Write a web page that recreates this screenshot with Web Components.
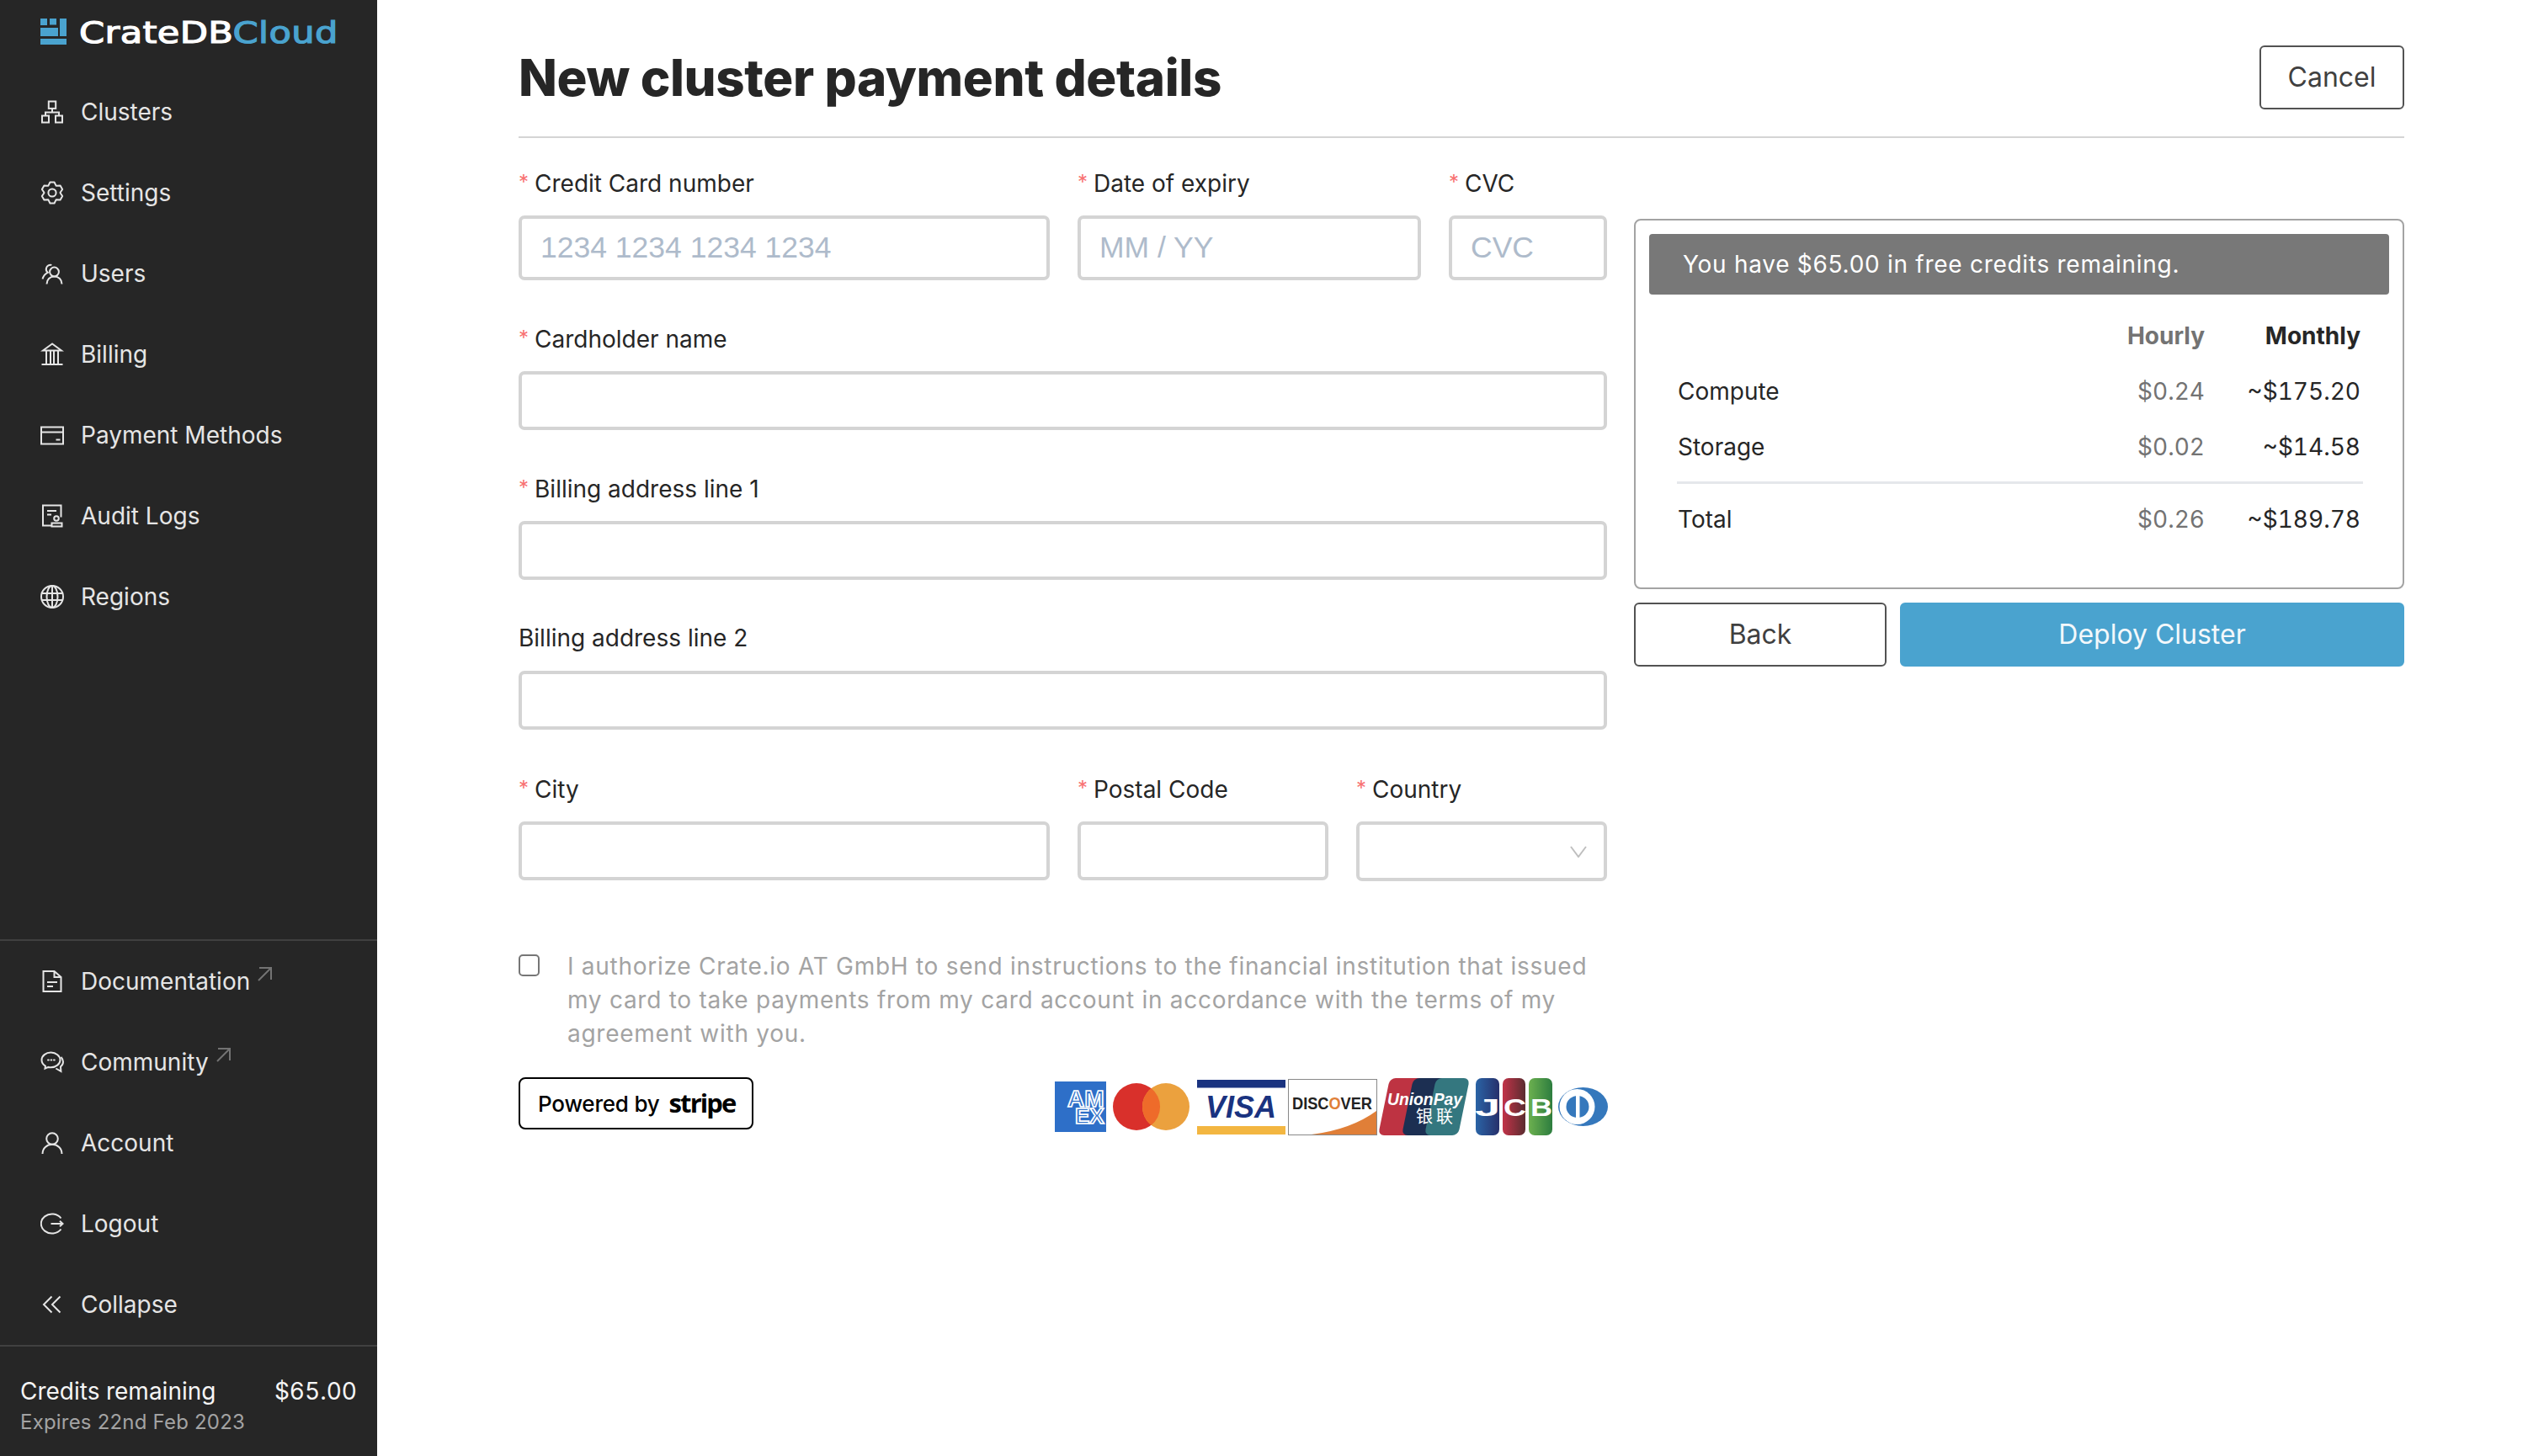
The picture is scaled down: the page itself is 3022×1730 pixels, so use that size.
<!DOCTYPE html>
<html>
<head>
<meta charset="utf-8">
<title>New cluster payment details</title>
<style>
  html, body { margin: 0; height: 100%; background: #fff; }
  body { font-family: Inter, "Noto Sans", sans-serif; overflow: hidden; }
</style>
</head>
<body>
<app-shell>
  <side-nav slot="nav"></side-nav>
  <payment-page></payment-page>
</app-shell>

<script>
// icons are drawn in a 28x28 box
function gearPath() {
  let d = '';
  for (let i = 0; i < 6; i++) {
    const a = (i * 60 - 90) * Math.PI / 180;
    const pt = (r, off) => {
      const x = 14 + r * Math.cos(a + off), y = 14 + r * Math.sin(a + off);
      return x.toFixed(2) + ' ' + y.toFixed(2);
    };
    d += (i ? 'L' : 'M') + pt(9.6, -0.5) + 'L' + pt(12.8, -0.2) + 'L' + pt(12.8, 0.2) + 'L' + pt(9.6, 0.5);
  }
  return d + 'Z';
}

const ICONS = {
  clusters: '<rect x="9.800" y="1.500" width="8.400" height="8.400"/><rect x="2" y="18.500" width="8" height="8"/><rect x="18" y="18.500" width="8" height="8"/><path d="M14 10v4.500M6 18.500v-4h16v4"/>',
  settings: `<path d="${gearPath()}" stroke-linejoin="round"/><circle cx="14" cy="14" r="4.600"/>`,
  users: '<circle cx="16.500" cy="12" r="5.400"/><path d="M7.500 26.500c0-5.200 3.800-9 9-9s9 3.800 9 9"/><path d="M13.400 3.900A5.200 5.200 0 0 0 7 7.500c-.6 2 .1 4 1.700 5.300C5.300 14.500 3.300 17.600 2.500 20.500"/>',
  billing: '<path d="M14 1.500 3 9.500h22zM1.500 26h25M7 9.500V26M12 9.500V26M16 9.500V26M21 9.500V26"/>',
  payment: '<rect x="1" y="4.500" width="26" height="20"/><path d="M1 10.500h26M18.500 19.500h5"/>',
  audit: '<path d="M13 25.500H3V1.500h21.500v14M8 8h11M8 12.500h5"/><circle cx="19" cy="17" r="2.800"/><path d="M13.500 26.500v-4h12v4z"/>',
  regions: '<circle cx="14" cy="14" r="13"/><ellipse cx="14" cy="14" rx="6.500" ry="13"/><path d="M14 1v26M1.500 10h25M1.500 18h25"/>',
  docs: '<path d="M3.500 2h13l8 7v17h-21zM16.500 2v7h8M8 15h12M8 20h7"/>',
  community: '<path d="M12.500 2.500C6.500 2.500 1.500 6.500 1.500 11.500c0 3 1.800 5.500 4.400 7.200l-.4 3 4-1.800c1 .2 2 .3 3 .3 6 0 11-4 11-8.700s-5-9-11-9z"/><path d="M24.500 8c1.300 1.500 2.500 3.500 2.500 5.500 0 2.500-1.100 4.500-3 6l.4 5.500-6-3.500"/><path d="M9 11.500h.8M12.500 11.500h.8M16 11.500h.8" stroke-linecap="round"/>',
  account: '<circle cx="14" cy="9" r="6.800"/><path d="M2.500 27c0-6.500 5-11.200 11.500-11.200S25.500 20.500 25.500 27"/>',
  logout: '<path d="M24.500 7.500A13 11.500 0 1 0 24.500 20.500"/><path d="M12.500 14h14M23 10.800l3.500 3.200-3.500 3.200"/>',
  collapse: '<path d="M13.500 4.500 4 14l9.500 9.500M23.500 4.500 14 14l9.500 9.500"/>'
};

class AppShell extends HTMLElement {
  constructor() {
    super();
    this.attachShadow({ mode: 'open' }).innerHTML = `
    <style>
      :host { display: flex; width: 3022px; height: 1730px; }
      main { flex: 1; min-width: 0; padding: 0 166px 0 168px; }
    </style>
    <slot name="nav"></slot>
    <main><slot></slot></main>`;
  }
}

class BrandLogo extends HTMLElement {
  constructor() {
    super();
    this.attachShadow({ mode: 'open' }).innerHTML = `
    <style>
      :host { display: flex; align-items: flex-start; height: 85px; box-sizing: border-box; padding: 22px 0 0 48px; }
      svg { width: 31px; height: 31px; flex: none; }
      .word {
        margin: -4px 0 0 15px;
        font: 400 36px/42px "DejaVu Sans", sans-serif;
        letter-spacing: .3px;
        color: #fff;
        -webkit-text-stroke: 1.200px currentColor;
        white-space: nowrap;
        transform: scaleX(1.2);
        transform-origin: left;
      }
      .word span { color: #4aa3cf; }
    </style>
    <svg viewBox="0 0 31 31" fill="#4aa3cf">
      <rect width="8" height="8"/><rect x="11" width="8" height="7.500"/><rect x="23" width="8" height="21"/>
      <rect y="11" width="21" height="10"/><rect y="24" width="31" height="7"/>
    </svg>
    <div class="word">CrateDB<span>Cloud</span></div>`;
  }
}

class NavItem extends HTMLElement {
  connectedCallback() {
    const ext = this.hasAttribute('external');
    this.attachShadow({ mode: 'open' }).innerHTML = `
    <style>
      :host { display: flex; align-items: center; height: 96px; padding-left: 48px; color: #e5e5e5; font: 400 28px/40px Inter, sans-serif; }
      .icon { width: 28px; height: 28px; margin-right: 20px; flex: none; fill: none; stroke: currentColor; stroke-width: 2; }
      .ext { width: 19px; height: 19px; margin: -18px 0 0 8px; fill: none; stroke: #737373; stroke-width: 2; }
    </style>
    <svg class="icon" viewBox="0 0 28 28">${ICONS[this.getAttribute('icon')]}</svg>
    <slot></slot>
    ${ext ? '<svg class="ext" viewBox="0 0 19 19"><path d="M3 2h14v14M17 2 2 17"/></svg>' : ''}`;
  }
}

class CreditsBox extends HTMLElement {
  constructor() {
    super();
    this.attachShadow({ mode: 'open' }).innerHTML = `
    <style>
      :host { display: block; flex: none; height: 132px; box-sizing: border-box; padding: 33px 24px 0; border-top: 2px solid #404040; font-family: Inter, sans-serif; }
      .top { display: flex; justify-content: space-between; font-size: 28px; line-height: 40px; color: #f5f5f5; font-variant-numeric: tabular-nums; }
      .exp { font-size: 24px; line-height: 34px; color: #a3a3a3; letter-spacing: .2px; }
    </style>
    <div class="top"><span>Credits remaining</span><span>$65.00</span></div>
    <div class="exp">Expires 22nd Feb 2023</div>`;
  }
}

class SideNav extends HTMLElement {
  constructor() {
    super();
    this.attachShadow({ mode: 'open' }).innerHTML = `
    <style>
      :host { display: flex; flex-direction: column; width: 448px; height: 1730px; background: #262626; flex: none; }
      .grow { flex: 1; }
      .lower { border-top: 2px solid #404040; }
    </style>
    <brand-logo></brand-logo>
    <div class="grow">
      <nav-item icon="clusters">Clusters</nav-item>
      <nav-item icon="settings">Settings</nav-item>
      <nav-item icon="users">Users</nav-item>
      <nav-item icon="billing">Billing</nav-item>
      <nav-item icon="payment">Payment Methods</nav-item>
      <nav-item icon="audit">Audit Logs</nav-item>
      <nav-item icon="regions">Regions</nav-item>
    </div>
    <div class="lower">
      <nav-item icon="docs" external>Documentation</nav-item>
      <nav-item icon="community" external>Community</nav-item>
      <nav-item icon="account">Account</nav-item>
      <nav-item icon="logout">Logout</nav-item>
      <nav-item icon="collapse">Collapse</nav-item>
    </div>
    <credits-box></credits-box>`;
  }
}

class FormField extends HTMLElement {
  connectedCallback() {
    const required = this.hasAttribute('required');
    const h = this.getAttribute('height') || 70;
    const ph = this.getAttribute('placeholder');
    const select = this.hasAttribute('select');
    this.attachShadow({ mode: 'open' }).innerHTML = `
    <style>
      :host { display: block; min-width: 0; font-family: Inter, sans-serif; }
      label { display: block; height: 40px; margin-bottom: 18px; font-size: 28px; line-height: 38px; color: #262626; white-space: nowrap; }
      i { font-style: normal; color: #f87171; font-size: 24px; margin-right: 7px; vertical-align: 3px; }
      .box { display: flex; align-items: center; justify-content: space-between; box-sizing: border-box; height: ${h}px;
        border: 4px solid #d4d4d4; border-radius: 7px; padding: 0 22px; background: #fff; }
      .ph { font: 35.500px/60px "Liberation Sans", Arial, sans-serif; color: #aebbcb; white-space: nowrap; margin-top: -1px; }
      input { flex: 1; min-width: 0; border: 0; outline: 0; padding: 0; font: inherit; background: transparent; }
      svg { width: 20px; height: 14px; margin-right: -2px; fill: none; stroke: #bfbfbf; stroke-width: 2; }
    </style>
    <label>${required ? '<i>*</i>' : ''}<slot></slot></label>
    <div class="box">
      ${ph ? `<span class="ph">${ph}</span>` : select ? '' : '<input type="text">'}
      ${select ? '<span></span><svg viewBox="0 0 20 14"><path d="M1 1l9 12 9-12"/></svg>' : ''}
    </div>`;
  }
}

class StripeBadge extends HTMLElement {
  constructor() {
    super();
    this.attachShadow({ mode: 'open' }).innerHTML = `
    <style>
      :host { display: flex; align-items: center; box-sizing: border-box; width: 279px; height: 62px; padding-left: 21px;
        border: 2px solid #000; border-radius: 8px; color: #000; white-space: nowrap; }
      .p { font: 500 26px Inter, sans-serif; letter-spacing: -.2px; }
      .s { font: 700 31px "Open Sans", sans-serif; margin-left: 11px; letter-spacing: -1.900px; margin-top: -3px; }
    </style>
    <span class="p">Powered by</span><span class="s">stripe</span>`;
  }
}

class CardLogos extends HTMLElement {
  constructor() {
    super();
    this.attachShadow({ mode: 'open' }).innerHTML = `
    <style>
      :host { display: flex; align-items: center; height: 68px; margin: 1px -1px 0 0; }
      svg { flex: none; display: block; }
      text { font-family: "Liberation Sans", Arial, sans-serif; font-weight: 700; }
    </style>
    <svg width="61" height="60" style="margin-right:8px" viewBox="0 0 61 60">
      <rect width="61" height="60" fill="#2e6fc8"/>
      <text fill="#2e6fc8" stroke="#fff" stroke-width="1.700"><tspan x="15" y="30" font-size="28">AM</tspan><tspan x="24" y="50" font-size="26">EX</tspan></text>
    </svg>
    <svg width="91" height="56" style="margin-right:9px" viewBox="0 0 91 56">
      <circle cx="28" cy="28" r="28" fill="#d9302b"/>
      <circle cx="63" cy="28" r="28" fill="#eba13e"/>
      <path d="M45.500 6.100A28 28 0 0 1 45.500 49.900 28 28 0 0 1 45.500 6.100z" fill="#ee6b2a"/>
    </svg>
    <svg width="105" height="65" style="margin-right:3px" viewBox="0 0 105 65">
      <rect width="105" height="9.500" fill="#1a3380"/>
      <rect y="55" width="105" height="10" fill="#f3b641"/>
      <text x="10" y="45" font-size="36" font-style="italic" fill="#1a3380">VISA</text>
    </svg>
    <svg width="106" height="67" style="margin-right:1px" viewBox="0 0 106 67">
      <rect x=".5" y=".5" width="105" height="66" fill="#fff" stroke="#888"/>
      <path d="M28 66Q75 60 105 38V66z" fill="#e07f38"/>
      <text x="5" y="36" font-size="20" textLength="95" lengthAdjust="spacingAndGlyphs" fill="#222">DISC<tspan fill="#e07f38">O</tspan>VER</text>
    </svg>
    <svg width="109" height="68" style="margin-right:7px" viewBox="0 0 109 68">
      <g transform="skewX(-11.600)">
        <rect x="14" width="46" height="68" rx="7" fill="#be3342"/>
        <rect x="42" width="46" height="68" rx="7" fill="#1c2f52"/>
        <rect x="69" width="40" height="68" rx="7" fill="#34777f"/>
      </g>
      <text x="11" y="32" font-size="20" font-style="italic" textLength="89" lengthAdjust="spacingAndGlyphs" fill="#fff">UnionPay</text>
      <text x="45" y="53" font-size="20" letter-spacing="4" fill="#fff" style="font-family:'Noto Sans CJK SC',sans-serif;font-weight:400">银联</text>
    </svg>
    <svg width="92" height="68" style="margin-right:6px" viewBox="0 0 92 68">
      <defs>
        <linearGradient id="jb"><stop offset="0" stop-color="#2a64a6"/><stop offset="1" stop-color="#27306b"/></linearGradient>
        <linearGradient id="jr"><stop offset="0" stop-color="#c23348"/><stop offset="1" stop-color="#5a2c30"/></linearGradient>
        <linearGradient id="jg"><stop offset="0" stop-color="#6cb04f"/><stop offset="1" stop-color="#2d7d3f"/></linearGradient>
      </defs>
      <rect width="28" height="68" rx="7" fill="url(#jb)"/>
      <rect x="32" width="27" height="68" rx="7" fill="url(#jr)"/>
      <rect x="63" width="28" height="68" rx="7" fill="url(#jg)"/>
      <text transform="translate(-1 45) scale(1.800 1)" font-size="30" fill="#fff">J</text>
      <text transform="translate(33 45) scale(1.250 1)" font-size="30" fill="#fff">C</text>
      <text transform="translate(65 45) scale(1.200 1)" font-size="30" fill="#fff">B</text>
    </svg>
    <svg width="59" height="46" viewBox="0 0 59 46">
      <ellipse cx="29.500" cy="23" rx="29.500" ry="23" fill="#3578bc"/>
      <ellipse cx="22.500" cy="23" rx="21" ry="21" fill="#fff"/>
      <ellipse cx="23" cy="23" rx="13.500" ry="13" fill="#3578bc"/>
      <rect x="21" y="8" width="4.500" height="30" fill="#fff"/>
    </svg>`;
  }
}

class ActionButton extends HTMLElement {
  constructor() {
    super();
    this.attachShadow({ mode: 'open' }).innerHTML = `
    <style>
      :host { display: flex; align-items: center; justify-content: center; box-sizing: border-box; height: 76px;
        border: 2px solid #525252; border-radius: 6px; background: #fff; color: #404040;
        font: 400 32px/44px Inter, sans-serif; cursor: pointer; }
      :host([primary]) { background: #4aa3cf; border-color: #4aa3cf; color: #f3f8fb; }
    </style>
    <slot></slot>`;
  }
}

class PriceRow extends HTMLElement {
  connectedCallback() {
    this.attachShadow({ mode: 'open' }).innerHTML = `
    <style>
      :host { display: grid; grid-template-columns: 1fr 125px 185px; align-items: center; height: 66px; color: #262626; font: 400 28px/40px Inter, sans-serif; font-variant-numeric: tabular-nums; }
      :host([head]) { font-weight: 700; }
      .h { text-align: right; color: #737373; }
      .m { text-align: right; }
    </style>
    <span><slot></slot></span>
    <span class="h">${this.getAttribute('hourly')}</span>
    <span class="m">${this.getAttribute('monthly')}</span>`;
  }
}

class PriceSummary extends HTMLElement {
  constructor() {
    super();
    this.attachShadow({ mode: 'open' }).innerHTML = `
    <style>
      :host { display: block; box-sizing: border-box; height: 440px; padding: 16px; border: 2px solid #a3a3a3; border-radius: 8px; font-family: Inter, sans-serif; }
      .alert { height: 72px; display: flex; align-items: center; padding-left: 40px; border-radius: 4px; background: #787878; color: #fff; font-size: 28px; letter-spacing: .72px; }
      .rows { margin: 16px 34px 0 34px; }
      hr { height: 3px; margin: 8px -3px 9px -1px; border: 0; background: #e5e7eb; }
    </style>
    <div class="alert">You have $65.00 in free credits remaining.</div>
    <div class="rows">
      <price-row head hourly="Hourly" monthly="Monthly"></price-row>
      <price-row hourly="$0.24" monthly="~$175.20">Compute</price-row>
      <price-row hourly="$0.02" monthly="~$14.58">Storage</price-row>
      <hr>
      <price-row hourly="$0.26" monthly="~$189.78">Total</price-row>
    </div>`;
  }
}

class PaymentPage extends HTMLElement {
  constructor() {
    super();
    this.attachShadow({ mode: 'open' }).innerHTML = `
    <style>
      :host { display: block; color: #262626; }
      header { display: flex; justify-content: space-between; align-items: center; height: 108px; padding-top: 54px; border-bottom: 2px solid #d4d4d4; box-sizing: content-box; }
      h1 { margin: -33px 0 0; font: 800 60px/76px Inter, sans-serif; color: #262626; letter-spacing: -.38px; }
      header action-button { width: 172px; margin-top: -32px; }
      .cols { display: grid; grid-template-columns: 1293px 915px; column-gap: 32px; }
      form { display: flex; flex-direction: column; gap: 50px; padding-top: 34px; }
      .r3 { display: grid; grid-template-columns: 631px 408px 1fr; column-gap: 33px; }
      .r5 { display: grid; grid-template-columns: 631px 298px 1fr; column-gap: 33px; margin-top: 1px; }
      .agree { display: flex; gap: 33px; margin-top: 31px; }
      .check { appearance: none; flex: none; box-sizing: border-box; width: 25px; height: 26px; margin: 6px 0 0; border: 2.500px solid #767676; border-radius: 5px; background: #fff; }
      .agree p { margin: 0; font: 400 28px/40px Inter, sans-serif; color: #a3a3a3; letter-spacing: .73px; }
      .foot { display: flex; justify-content: space-between; margin-top: -18px; }
      aside { padding-top: 96px; }
      .btns { display: grid; grid-template-columns: 300px 1fr; column-gap: 16px; margin-top: 16px; }
    </style>
    <header>
      <h1>New cluster payment details</h1>
      <action-button>Cancel</action-button>
    </header>
    <div class="cols">
      <form>
        <div class="r3">
          <form-field required height="77" placeholder="1234 1234 1234 1234">Credit Card number</form-field>
          <form-field required height="77" placeholder="MM / YY">Date of expiry</form-field>
          <form-field required height="77" placeholder="CVC">CVC</form-field>
        </div>
        <form-field required>Cardholder name</form-field>
        <form-field required>Billing address line 1</form-field>
        <form-field>Billing address line 2</form-field>
        <div class="r5">
          <form-field required>City</form-field>
          <form-field required>Postal Code</form-field>
          <form-field required select height="71">Country</form-field>
        </div>
        <div class="agree">
          <input class="check" type="checkbox">
          <p>I authorize Crate.io AT GmbH to send instructions to the financial institution that issued my card to take payments from my card account in accordance with the terms of my agreement with you.</p>
        </div>
        <div class="foot">
          <stripe-badge></stripe-badge>
          <card-logos></card-logos>
        </div>
      </form>
      <aside>
        <price-summary></price-summary>
        <div class="btns">
          <action-button>Back</action-button>
          <action-button primary>Deploy Cluster</action-button>
        </div>
      </aside>
    </div>`;
  }
}

customElements.define('app-shell', AppShell);
customElements.define('brand-logo', BrandLogo);
customElements.define('nav-item', NavItem);
customElements.define('credits-box', CreditsBox);
customElements.define('side-nav', SideNav);
customElements.define('form-field', FormField);
customElements.define('stripe-badge', StripeBadge);
customElements.define('card-logos', CardLogos);
customElements.define('action-button', ActionButton);
customElements.define('price-row', PriceRow);
customElements.define('price-summary', PriceSummary);
customElements.define('payment-page', PaymentPage);
</script>
</body>
</html>
